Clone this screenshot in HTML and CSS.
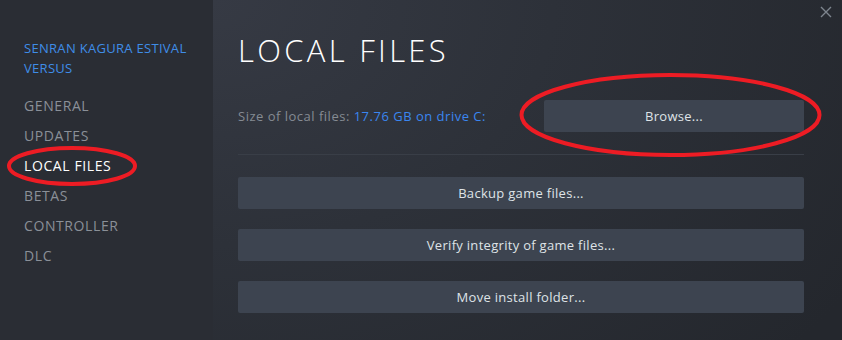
FILE: index.html
```
<!DOCTYPE html>
<html>
<head>
<meta charset="utf-8">
<link rel="stylesheet" href="styles.css">
</head>
<body>
<div class="dialog">
  <aside class="sidebar">
    <div class="game-title">SENRAN KAGURA ESTIVAL VERSUS</div>
    <nav class="nav">
      <div class="nav-item">GENERAL</div>
      <div class="nav-item">UPDATES</div>
      <div class="nav-item active">LOCAL FILES</div>
      <div class="nav-item">BETAS</div>
      <div class="nav-item">CONTROLLER</div>
      <div class="nav-item">DLC</div>
    </nav>
  </aside>
  <main class="content">
    <h1 class="heading">LOCAL FILES</h1>
    <div class="size-row">
      <div class="size-text">Size of local files: <span class="size-value">17.76 GB on drive C:</span></div>
      <div class="btn browse">Browse...</div>
    </div>
    <div class="separator"></div>
    <div class="actions">
      <div class="btn">Backup game files...</div>
      <div class="btn">Verify integrity of game files...</div>
      <div class="btn">Move install folder...</div>
    </div>
  </main>
  <svg class="close" width="12" height="12" viewBox="0 0 12 12"><path d="M1 1L11 11M11 1L1 11" stroke="#7d858e" stroke-width="1.4"/></svg>
  <svg class="annot" width="842" height="340" viewBox="0 0 842 340">
    <ellipse cx="72" cy="166" rx="63" ry="18" fill="none" stroke="#ed1c24" stroke-width="4"/>
    <ellipse cx="670.5" cy="115" rx="149" ry="40" fill="none" stroke="#ed1c24" stroke-width="4"/>
  </svg>
</div>
</body>
</html>
```
FILE: styles.css
```
* { box-sizing: border-box; }
html, body { margin: 0; padding: 0; }
body {
  width: 842px;
  height: 340px;
  overflow: hidden;
  font-family: "Open Sans", "Noto Sans", sans-serif;
  background: #282b32;
}
.dialog {
  position: relative;
  display: flex;
  width: 842px;
  height: 340px;
}
.sidebar {
  width: 213px;
  flex: none;
  background: #2a2d34;
  padding: 38px 0 0 24px;
}
.game-title {
  color: #3f8de8;
  font-size: 13px;
  line-height: 20px;
  letter-spacing: 0.3px;
  width: 180px;
  margin-bottom: 13px;
}
.nav {
  display: flex;
  flex-direction: column;
}
.nav-item {
  color: #8a9098;
  font-size: 14px;
  line-height: 30px;
  letter-spacing: 0.6px;
}
.nav-item.active { color: #ffffff; }
.content {
  flex: 1;
  padding: 30px 38px 0 25px;
  background: radial-gradient(ellipse 120% 160% at 0% 0%, #363a44 0%, #2d3139 45%, #24272d 100%);
}
.heading {
  margin: 0;
  color: #ffffff;
  font-weight: 300;
  font-size: 31px;
  line-height: 40px;
  letter-spacing: 3.3px;
}
.size-row {
  margin-top: 30px;
  display: flex;
  justify-content: space-between;
  align-items: center;
}
.size-text {
  color: #858b93;
  font-size: 13px;
  letter-spacing: 0.5px;
}
.size-value { color: #3a86f0; }
.btn {
  height: 32px;
  background: #3d4450;
  border-radius: 2px;
  color: #dfe3e7;
  font-size: 13px;
  letter-spacing: 0.3px;
  display: flex;
  align-items: center;
  justify-content: center;
}
.browse { width: 260px; }
.separator {
  height: 1px;
  background: #393e47;
  margin-top: 22px;
}
.actions {
  margin-top: 22px;
  display: flex;
  flex-direction: column;
  gap: 20px;
}
.close {
  position: absolute;
  top: 6px;
  right: 10px;
}
.annot {
  position: absolute;
  left: 0;
  top: 0;
  pointer-events: none;
}
```
